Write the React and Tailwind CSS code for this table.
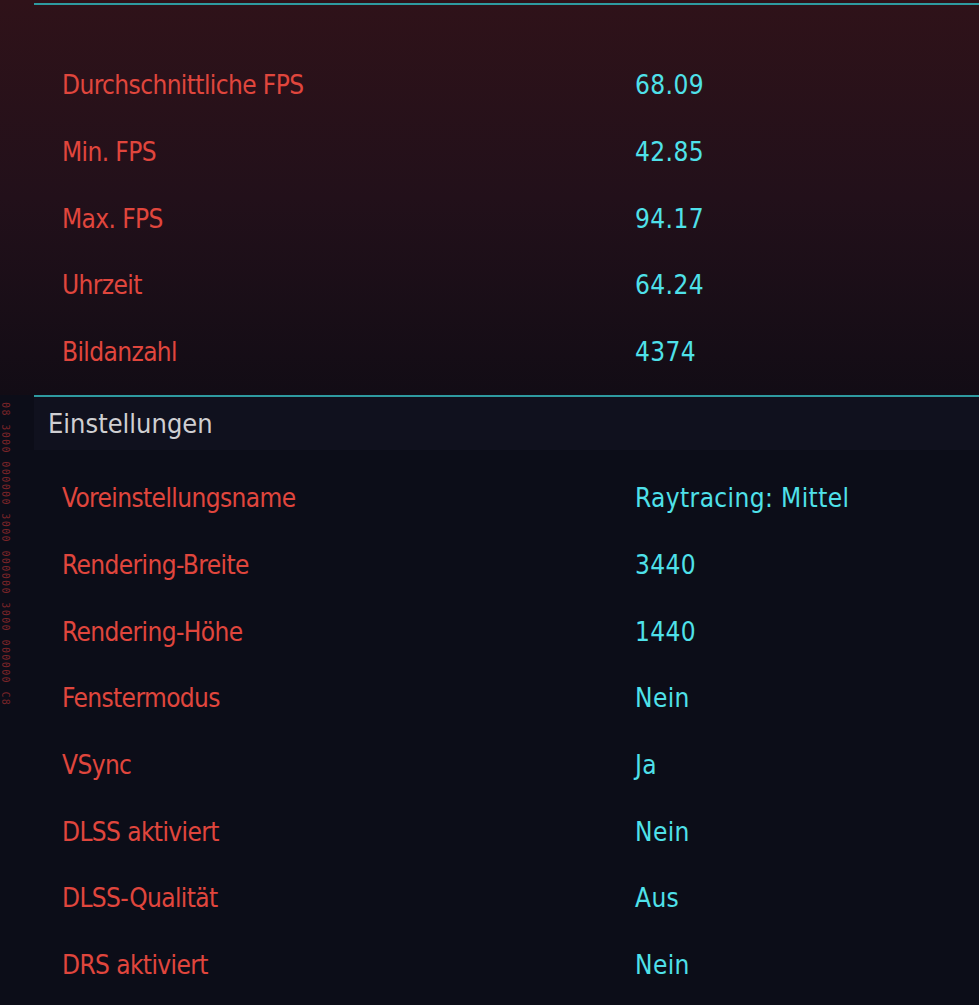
import React from "react";

const perf = [
  ["Durchschnittliche FPS", "68.09"],
  ["Min. FPS", "42.85"],
  ["Max. FPS", "94.17"],
  ["Uhrzeit", "64.24"],
  ["Bildanzahl", "4374"],
];

const settings = [
  ["Voreinstellungsname", "Raytracing: Mittel"],
  ["Rendering-Breite", "3440"],
  ["Rendering-Höhe", "1440"],
  ["Fenstermodus", "Nein"],
  ["VSync", "Ja"],
  ["DLSS aktiviert", "Nein"],
  ["DLSS-Qualität", "Aus"],
  ["DRS aktiviert", "Nein"],
];

const font = { fontFamily: '"DejaVu Sans Condensed", "Liberation Sans", sans-serif' };

function Row({ label, value }) {
  return (
    <div className="flex items-center h-[66.7px] pl-[28px]">
      <div className="w-[573px] text-[#e0463d] text-[26px] leading-none tracking-[-0.6px]">{label}</div>
      <div className="text-[#4fe1ea] text-[26px] leading-none tracking-[0.4px]">{value}</div>
    </div>
  );
}

export default function App() {
  return (
    <div className="relative w-[979px] h-[1005px] overflow-hidden bg-[#0c0d18]" style={font}>
      <div className="pt-[3px] h-[395px] bg-gradient-to-b from-[#2f1219] via-[#22101a] to-[#120c15]">
        <div className="ml-[34px] border-t-2 border-[#2e9aa0] pt-[47px]">
          {perf.map(([l, v]) => (
            <Row key={l} label={l} value={v} />
          ))}
        </div>
      </div>
      <div className="ml-[34px] border-t-2 border-[#2e9aa0]">
        <div className="h-[53px] bg-[#10111e] flex items-center pl-[14px] text-[#cfcfd2] text-[27px] leading-none">
          Einstellungen
        </div>
        <div className="pt-[15px]">
          {settings.map(([l, v]) => (
            <Row key={l} label={l} value={v} />
          ))}
        </div>
      </div>
      <div
        className="absolute left-0 top-[402px] text-[10px] leading-none text-[#7a2428] tracking-[1.4px] [writing-mode:vertical-rl]"
        style={{ fontFamily: '"DejaVu Sans Mono", monospace' }}
      >
        08 3000 000000 3000 000000 3000 000000 C8
      </div>
    </div>
  );
}
